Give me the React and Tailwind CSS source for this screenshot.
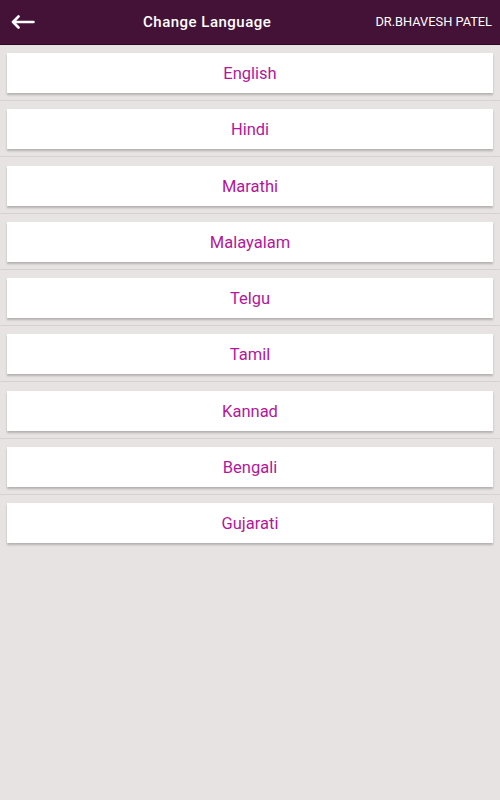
const languages = ['English', 'Hindi', 'Marathi', 'Malayalam', 'Telgu', 'Tamil', 'Kannad', 'Bengali', 'Gujarati']

export default function App() {
  return (
    <div className="w-[500px] h-[800px] bg-[#e7e3e2] font-['Roboto',sans-serif]">
      <div className="h-[45px] bg-[#441237] border-b border-[#2a0a22] flex items-center">
        <button className="pl-[11px] pr-[8px] h-full flex items-center">
          <svg width="24" height="14" viewBox="0 0 24 14" fill="none" stroke="white" strokeWidth="2.6" strokeLinecap="round" strokeLinejoin="round">
            <path d="M22.5 7H2M7.5 1.5L2 7l5.5 5.5" />
          </svg>
        </button>
        <h1 className="ml-[100px] text-white text-[15px] font-medium tracking-[0.5px]">Change Language</h1>
        <span className="ml-auto pr-[8px] text-white text-[12.8px]">DR.BHAVESH PATEL</span>
      </div>

      <div className="pt-[8px]">
        {languages.map((lang, i) => (
          <div key={lang}>
            <div className="mx-[7px] h-[40px] bg-white shadow-[0_2px_2px_rgba(0,0,0,0.22)] flex items-center justify-center text-[#b3179b] text-[16.5px] pt-[3px]">
              {lang}
            </div>
            {i < languages.length - 1 && <div className="mt-[7px] mb-[8.25px] h-px bg-[#d6d2d1]" />}
          </div>
        ))}
      </div>
    </div>
  )
}
